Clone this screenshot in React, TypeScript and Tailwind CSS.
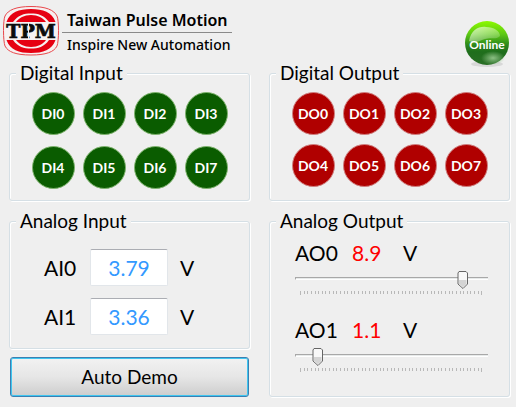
import React, { useState } from 'react';

const DI_CHANNELS = ['DI0', 'DI1', 'DI2', 'DI3', 'DI4', 'DI5', 'DI6', 'DI7'];
const DO_CHANNELS = ['DO0', 'DO1', 'DO2', 'DO3', 'DO4', 'DO5', 'DO6', 'DO7'];

const Logo: React.FC = () => (
    <svg width="58" height="52" viewBox="0 0 58 52" role="img" aria-label="TPM">
        <path d="M29 1.500C44 1.500 52 5 55 11c2 4 2 25 0 30-3 6-11 9-26 9s-23-3-26-9c-2-5-2-26 0-30C6 5 14 1.500 29 1.500Z" fill="#f7f0f0" stroke="#e8484c" />
        <path d="M4.500 17C8 7 17 4 29 4s21 3 24.500 13H47C42 10 36 8.500 29 8.500S16 10 11 17Z" fill="#e60012" />
        <path d="M4.500 35C8 45 17 48 29 48s21-3 24.500-13H47c-5 7-11 8.500-18 8.500S16 42 11 35Z" fill="#e60012" />
        <path d="M14 17c3-4 8-7 15-7s12 3 15 7Z" fill="#e60012" />
        <path d="M14 35c3 4 8 7 15 7s12-3 15-7Z" fill="#e60012" />
        <rect x="3.500" y="17.500" width="51" height="17" fill="#f7f2f2" />
        <text x="29" y="33" textAnchor="middle" fontFamily="DejaVu Serif, serif" fontWeight="700" fontSize="19" stroke="#0c0c0c" strokeWidth="0.7" fill="#0c0c0c">TPM</text>
        {/* Stencil cut through the P */}
        <path d="M26.500 18v16" stroke="#f7f2f2" strokeWidth="1" />
    </svg>
);

const OnlineBadge: React.FC = () => (
    <div className="relative w-[46px] h-[48px]">
        <svg width="46" height="48" viewBox="0 0 46 48" aria-hidden="true">
            <defs>
                <linearGradient id="ball" x1="0" y1="0" x2="0" y2="1">
                    <stop offset="0" stopColor="#8cfa00" />
                    <stop offset="0.3" stopColor="#5cc814" />
                    <stop offset="0.55" stopColor="#2c861c" />
                    <stop offset="0.7" stopColor="#1f6e1c" />
                    <stop offset="1" stopColor="#2a6e26" />
                </linearGradient>
                <radialGradient id="glow">
                    <stop offset="0" stopColor="#8cc084" />
                    <stop offset="1" stopColor="#8cc084" stopOpacity="0" />
                </radialGradient>
                <linearGradient id="shine" x1="0" y1="0" x2="1" y2="1">
                    <stop offset="0" stopColor="#fff" stopOpacity="0.7" />
                    <stop offset="1" stopColor="#fff" stopOpacity="0.1" />
                </linearGradient>
            </defs>
            <ellipse cx="23" cy="43" rx="16" ry="3" fill="#d8d8d8" />
            <circle cx="23" cy="22" r="22" fill="url(#ball)" />
            <ellipse cx="29" cy="37" rx="12" ry="7" fill="url(#glow)" />
            <path d="M5 20C7 9 15 5 22 6c8 0 14 4 14 9-4 4-9 1-15 3S10 23 5 20Z" fill="url(#shine)" />
        </svg>
        <span className="absolute inset-x-0 top-[14px] text-center font-['Lato',sans-serif] text-[12px] leading-5 font-bold text-white">Online</span>
    </div>
);

interface GroupBoxProps {
    title: string;
    className?: string;
    children: React.ReactNode;
}

const GroupBox: React.FC<GroupBoxProps> = ({ title, className = '', children }) => (
    <fieldset className={`min-w-0 rounded-[3px] border border-[#d5dfe5] shadow-[inset_1px_1px_0_#fff,1px_1px_0_#fff] ${className}`}>
        <legend className="ml-1.5 px-1 bg-[#efefef] text-[19px] leading-6">{title}</legend>
        {children}
    </fieldset>
);

interface AnalogInputProps {
    name: string;
    value: string;
}

const AnalogInput: React.FC<AnalogInputProps> = ({ name, value }) => (
    <div className="flex items-center text-[21px] leading-6">
        <label htmlFor={name} className="w-[46px]">{name}</label>
        <input
            id={name}
            readOnly
            value={value}
            className="w-[78px] h-[37px] rounded-[2px] border border-[#e2e6ea] border-t-[#abadb3] bg-white text-center text-[#3399ff] outline-none"
        />
        <span className="ml-3">V</span>
    </div>
);

interface AnalogOutputProps {
    name: string;
    value: string;
    start: number;
}

const AnalogOutput: React.FC<AnalogOutputProps> = ({ name, value, start }) => {
    const [position, setPosition] = useState(start);
    const volts = position === start ? value : (position / 10).toFixed(1);

    return (
        <div>
            <div className="flex text-[21px] leading-6">
                <label htmlFor={name} className="w-[57px]">{name}</label>
                <output htmlFor={name} className="w-[51px] text-[#ff0000]">{volts}</output>
                <span>V</span>
            </div>
            <div className="relative mt-1.5 h-[26px]">
                <div className="pt-1.5">
                    <div className="h-[3px] border-t border-l border-[#a8a8a8] border-b border-b-white bg-[#e7eaea]"></div>
                </div>
                <div className="mx-[5px] mt-[11px] flex justify-between">
                    {Array.from({ length: 51 }, (_, i) => (
                        <span key={i} className={`w-px bg-[#b8b8b8] ${i === 0 || i === 50 ? 'h-1' : 'h-[3px]'}`}></span>
                    ))}
                </div>
                {/* Thumb travels between the first and the last tick */}
                <div className="absolute inset-x-[5px] top-0">
                    <svg width="12" height="19" viewBox="0 0 12 19" className="absolute -translate-x-1/2" style={{ left: `${position}%` }} aria-hidden="true">
                        <path d="M2 .5h7l1.500 1.500v11L6 17.500 1 13V2Z" fill="#f8f8f8" stroke="#666" />
                        <path d="M2 9h7.500v4L6 16.300 2 12.800Z" fill="#d4d4d4" />
                    </svg>
                </div>
                <input
                    id={name}
                    type="range"
                    min={0}
                    max={100}
                    value={position}
                    onChange={e => setPosition(Number(e.target.value))}
                    className="absolute inset-x-0 top-0 w-full h-[19px] opacity-0 cursor-pointer"
                />
            </div>
        </div>
    );
};

export default function App() {
    const [outputs, setOutputs] = useState<string[]>([]);

    const toggleOutput = (name: string) => {
        setOutputs(prev => (prev.includes(name) ? prev.filter(n => n !== name) : [...prev, name]));
    };

    return (
        <main className="min-h-screen bg-[#efefef] pl-[9px] pr-1.5 pb-2.5 font-['Lato',sans-serif] text-black">
            <header className="flex items-start h-[61px] -ml-[7px]">
                <div className="pt-[5px]">
                    <Logo />
                </div>
                <div className="ml-0.5 pt-2 font-['Noto_Sans',sans-serif] whitespace-nowrap">
                    <h1 className="pl-[5px] pr-1 text-[16px] leading-6 font-semibold border-b border-[#8a8a8a]">Taiwan Pulse Motion</h1>
                    <p className="pl-[5px] text-[14px] leading-6 font-medium">Inspire New Automation</p>
                </div>
                <div className="ml-auto pt-[21px]">
                    <OnlineBadge />
                </div>
            </header>

            <div className="grid grid-cols-2 gap-x-[19px] gap-y-2">
                <GroupBox title="Digital Input" className="pb-[11px]">
                    <div className="mt-[7px] grid grid-cols-[repeat(4,43px)] justify-center gap-x-2 gap-y-[11px]">
                        {DI_CHANNELS.map(name => (
                            <div key={name} className="h-[43px] rounded-full border border-[#7db36c] bg-[#0a5c00] flex items-center justify-center text-[14px] font-bold text-white">
                                {name}
                            </div>
                        ))}
                    </div>
                </GroupBox>

                <GroupBox title="Digital Output" className="pb-[11px]">
                    <div className="mt-[7px] grid grid-cols-[repeat(4,43px)] justify-center gap-x-2 gap-y-[9px]">
                        {DO_CHANNELS.map(name => (
                            <button
                                key={name}
                                type="button"
                                onClick={() => toggleOutput(name)}
                                className={`h-[43px] rounded-full border text-[14px] font-bold text-white ${outputs.includes(name) ? 'border-[#f0a0a0] bg-[#ff2020]' : 'border-[#d08080] bg-[#b00000]'}`}
                            >
                                {name}
                            </button>
                        ))}
                    </div>
                </GroupBox>

                <div className="flex flex-col gap-2">
                    <GroupBox title="Analog Input" className="pb-[13px]">
                        <div className="mt-4 pl-[34px] flex flex-col gap-3">
                            <AnalogInput name="AI0" value="3.79" />
                            <AnalogInput name="AI1" value="3.36" />
                        </div>
                    </GroupBox>
                    <button
                        type="button"
                        className="mx-px h-10 rounded-[3px] border border-[#3c7fb1] bg-linear-to-b from-[#f2f2f2] from-0% via-[#e6e6e6] via-50% to-[#cdcdcd] shadow-[inset_0_0_0_1px_#3fc6f0] text-[19px]"
                    >
                        Auto Demo
                    </button>
                </div>

                <GroupBox title="Analog Output">
                    <div className="pl-[25px] pr-[21px] pt-2 flex flex-col gap-[21px]">
                        <AnalogOutput name="AO0" value="8.9" start={89} />
                        <AnalogOutput name="AO1" value="1.1" start={10} />
                    </div>
                </GroupBox>
            </div>
        </main>
    );
}
